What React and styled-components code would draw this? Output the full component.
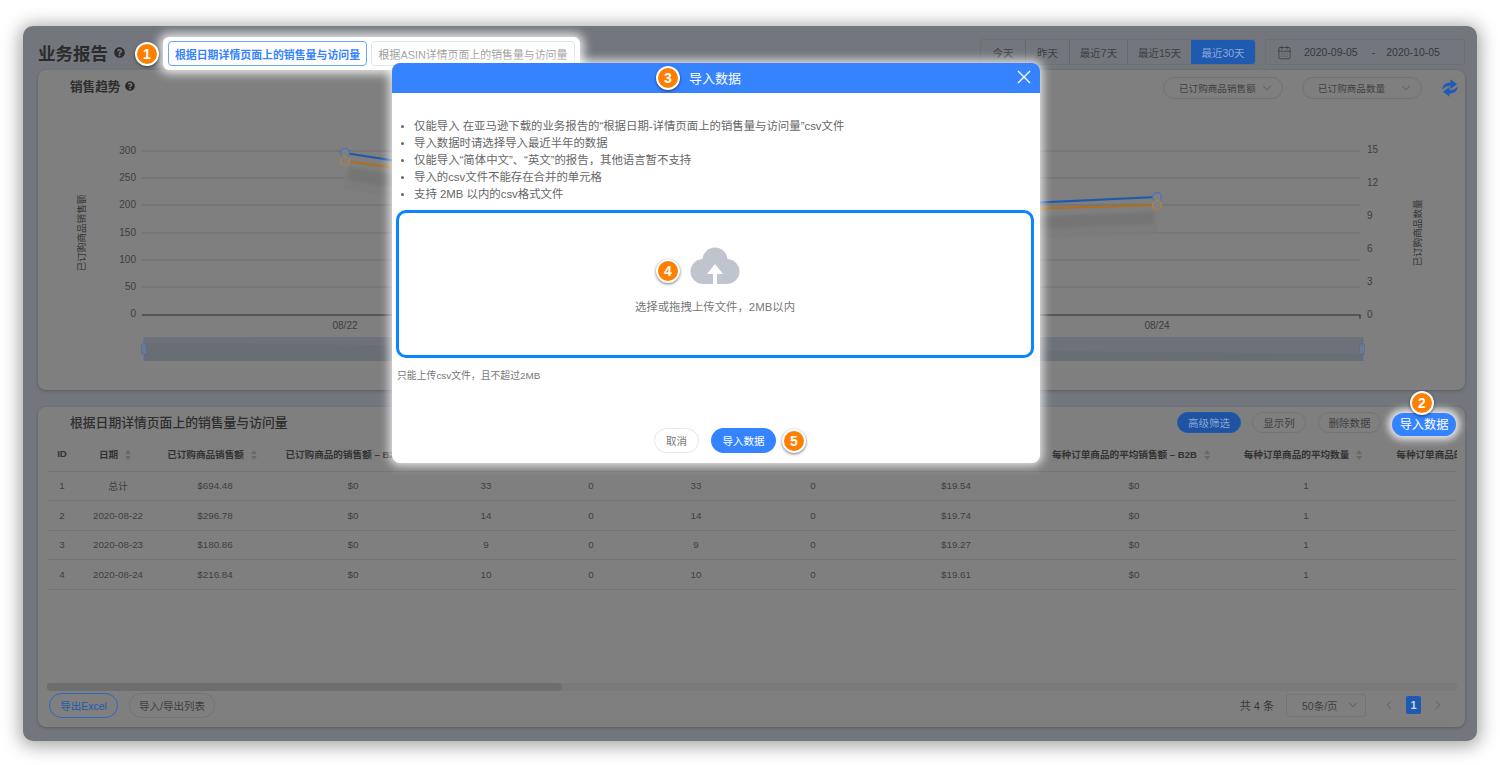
import React from "react";
import styled, { createGlobalStyle } from "styled-components";
import { FaQuestionCircle } from "react-icons/fa";
import { CalendarDays, ChevronDown, ChevronLeft, ChevronRight } from "lucide-react";

const Global = createGlobalStyle`
  html, body { margin: 0; padding: 0; background: #fff; }
  * { box-sizing: border-box; }
  body { font-family: "Liberation Sans", "Noto Sans CJK SC", sans-serif; }
`;

const Page = styled.div`
  position: relative;
  width: 1500px;
  height: 765px;
  padding: 26px 23px 24px;
  overflow: hidden;
`;
const Frame = styled.div`
  height: 715px;
  padding: 0 12px 14px 15px;
  background: #73777d;
  border-radius: 10px;
  box-shadow: 0 2px 18px 3px rgba(0, 0, 0, 0.36);
  display: flex;
  flex-direction: column;
`;
const Header = styled.header`
  height: 44px;
  padding-top: 8px;
  display: flex;
  align-items: center;
`;
const PageTitle = styled.h1`
  margin: 0;
  font-size: 17.5px;
  font-weight: 700;
  color: #2b2b2b;
  white-space: nowrap;
`;
const Help = styled(FaQuestionCircle)`
  color: #2b2b2b;
  flex: none;
  margin-left: ${(p) => p.$gap}px;
`;
const Tabs = styled.div`
  position: relative;
  z-index: 2;
  margin-left: 38px;
  margin-top: 3px;
  padding: 4px 5px;
  display: flex;
  gap: 4px;
  background: #fff;
  border-radius: 6px;
  box-shadow: 0 0 10px 4px rgba(255, 255, 255, 0.78);
`;
const Tab = styled.div`
  height: 25px;
  display: flex;
  align-items: center;
  justify-content: center;
  width: ${(p) => p.$w}px;
  font-size: 10.9px;
  white-space: nowrap;
  border-radius: 4px;
  border: 1px solid ${(p) => (p.$active ? "#6ba4ff" : "#dbe6f5")};
  color: ${(p) => (p.$active ? "#3583ff" : "#9a9a9a")};
  font-weight: ${(p) => (p.$active ? 700 : 400)};
`;
const RangeGroup = styled.div`
  margin-left: auto;
  display: flex;
  height: 26px;
  border: 1px solid #6c6f73;
  border-radius: 3px;
`;
const RangeButton = styled.div`
  width: ${(p) => p.$w}px;
  display: flex;
  align-items: center;
  justify-content: center;
  font-size: 10.5px;
  white-space: nowrap;
  color: ${(p) => (p.$active ? "#8aa9d8" : "#3c3f43")};
  background: ${(p) => (p.$active ? "#1f5ab0" : "transparent")};
  border-left: ${(p) => (p.$first || p.$active ? "none" : "1px solid #65686c")};
  border-radius: ${(p) => (p.$active ? "0 3px 3px 0" : "0")};
`;
const DatePicker = styled.div`
  margin-left: 9px;
  width: 200px;
  height: 26px;
  padding-left: 11px;
  display: flex;
  align-items: center;
  border: 1px solid #6c6f73;
  border-radius: 3px;
  color: #35383c;
  font-size: 10.5px;
`;
const DateText = styled.span`
  margin-left: ${(p) => p.$gap}px;
  white-space: nowrap;
`;
const Card = styled.section`
  height: 320px;
  background: #7f7f7f;
  border-radius: 8px;
  box-shadow: 0 1px 3px rgba(60, 64, 70, 0.5);
  display: flex;
  flex-direction: column;
  & + & { margin-top: 17px; }
`;
const ChartHead = styled.div`
  height: 30px;
  padding: 6px 7px 1px 32px;
  display: flex;
  align-items: center;
`;
const CardTitle = styled.h2`
  margin: 0;
  font-size: ${(p) => p.$size}px;
  font-weight: ${(p) => p.$weight};
  color: #2e2e2e;
  white-space: nowrap;
`;
const ChartTitleSlot = styled.div`
  display: flex;
  align-items: center;
  margin-top: -4px;
  margin-right: auto;
`;
const PillSelect = styled.div`
  width: 120px;
  height: 22px;
  padding: 0 8px 0 15px;
  display: flex;
  align-items: center;
  justify-content: space-between;
  border: 1px solid #737373;
  border-radius: 11px;
  font-size: 9.6px;
  white-space: nowrap;
  color: #3f3f3f;
  margin-left: ${(p) => p.$gap}px;
`;
const RefreshIcon = styled.svg`
  margin-left: 20px;
  flex: none;
  fill: #1f5ab4;
`;
const ChartSvg = styled.svg`
  display: block;
  width: 1427px;
  height: 290px;
  font-family: "Liberation Sans", "Noto Sans CJK SC", sans-serif;
`;
const TableHead = styled.div`
  height: 30px;
  padding: 0 9px 0 32px;
  display: flex;
  align-items: center;
  justify-content: flex-end;
`;
const TitleSlot = styled.div`
  margin-right: auto;
  margin-top: -2px;
`;
const Pill = styled.div`
  height: 21px;
  width: ${(p) => p.$w}px;
  margin-left: ${(p) => p.$gap}px;
  display: flex;
  align-items: center;
  justify-content: center;
  border-radius: 11px;
  font-size: 10.5px;
  white-space: nowrap;
  border: 1px solid ${(p) => (p.$primary ? "#1f5ab0" : "#747474")};
  color: ${(p) => (p.$primary ? "#86a6d6" : "#404040")};
  background: ${(p) => (p.$primary ? "#1f52a0" : "transparent")};
`;
const ImportPill = styled.div`
  position: relative;
  z-index: 2;
  top: 2px;
  margin-left: 11px;
  width: 64px;
  height: 23px;
  display: flex;
  align-items: center;
  justify-content: center;
  border-radius: 12px;
  background: #3583ff;
  color: #fff;
  font-size: 12.2px;
  white-space: nowrap;
  box-shadow: 0 0 7px 4px rgba(255, 255, 255, 0.8);
`;
const TableWrap = styled.div`
  flex: none;
  height: 246px;
  margin: 0 8px 0 9px;
  overflow: hidden;
`;
const Table = styled.table`
  width: 1504px;
  table-layout: fixed;
  border-collapse: collapse;
`;
const Th = styled.th`
  height: 34px;
  padding: 0 ${(p) => (p.$sort ? 6 : 0)}px 0 0;
  font-size: 9.6px;
  font-weight: 700;
  color: #333;
  white-space: nowrap;
  text-align: center;
  border-bottom: 1px solid #747474;
`;
const Td = styled.td`
  height: 29.5px;
  padding: 0;
  font-size: 9.8px;
  color: #404040;
  white-space: nowrap;
  text-align: center;
  border-bottom: 1px solid #747474;
`;
const SortMark = styled.span`
  display: inline-flex;
  flex-direction: column;
  gap: 2px;
  margin-left: 7px;
  vertical-align: middle;
  &::before, &::after {
    content: "";
    width: 0;
    height: 0;
    border-left: 3.5px solid transparent;
    border-right: 3.5px solid transparent;
  }
  &::before { border-bottom: 4px solid #696969; }
  &::after { border-top: 4px solid #696969; }
`;
const ScrollTrack = styled.div`
  height: 8px;
  margin: 0 8px 0 9px;
  background: #7a7a7a;
  border-radius: 4px;
`;
const ScrollThumb = styled.div`
  width: 515px;
  height: 8px;
  background: #6e6e6e;
  border-radius: 4px;
`;
const Footer = styled.div`
  flex: 1;
  padding: 0 20px 8px 11px;
  display: flex;
  align-items: center;
`;
const FootButton = styled.div`
  height: 25px;
  width: ${(p) => p.$w}px;
  margin-right: 11px;
  display: flex;
  align-items: center;
  justify-content: center;
  border-radius: 13px;
  font-size: 10.5px;
  white-space: nowrap;
  color: ${(p) => (p.$primary ? "#1f5ab0" : "#404040")};
  border: 1px solid ${(p) => (p.$primary ? "#2f68c0" : "#747474")};
`;
const Total = styled.div`
  margin-left: auto;
  font-size: 11px;
  color: #383838;
  white-space: nowrap;
`;
const PageSize = styled.div`
  margin-left: 12px;
  width: 80px;
  height: 23px;
  padding: 0 5px 0 15px;
  display: flex;
  align-items: center;
  justify-content: space-between;
  border: 1px solid #747474;
  border-radius: 3px;
  font-size: 10.5px;
  color: #404040;
`;
const Pager = styled.div`
  margin-left: 16px;
  display: flex;
  align-items: center;
  gap: 10px;
  color: #5f5f5f;
`;
const PageNum = styled.div`
  width: 15px;
  height: 18px;
  display: flex;
  align-items: center;
  justify-content: center;
  background: #1f5ab0;
  border-radius: 2px;
  color: #c9d6ea;
  font-size: 11px;
  font-weight: 700;
`;
const Modal = styled.div`
  position: absolute;
  z-index: 3;
  left: 392px;
  top: 63px;
  width: 648px;
  height: 400px;
  background: #fff;
  border-radius: 8px;
  box-shadow: 0 0 10px 3px rgba(255, 255, 255, 0.8);
  display: flex;
  flex-direction: column;
`;
const ModalHead = styled.div`
  position: relative;
  height: 30px;
  flex: none;
  background: #3583ff;
  border-radius: 8px 8px 0 0;
  display: flex;
  align-items: center;
  justify-content: center;
  padding-bottom: 2px;
  padding-right: 2px;
  color: #fff;
  font-size: 13px;
`;
const CloseIcon = styled.svg`
  position: absolute;
  right: 9px;
  top: 7px;
`;
const Rules = styled.ul`
  margin: 25px 0 0;
  padding: 0 0 0 22px;
  font-size: 11.4px;
  line-height: 17px;
  color: #666;
  li { padding: 0; white-space: nowrap; }
  li::marker { color: #666; font-size: 10px; }
`;
const DropZone = styled.div`
  margin: 7px 6px 0 4px;
  height: 148px;
  flex: none;
  border: 3px solid #0a84ff;
  border-radius: 10px;
  display: flex;
  flex-direction: column;
  align-items: center;
  padding-top: 34px;
`;
const DropText = styled.div`
  margin-top: 15px;
  font-size: 11.4px;
  line-height: 16px;
  color: #777;
`;
const Hint = styled.div`
  margin: 11px 0 0 5px;
  font-size: 9.85px;
  line-height: 14px;
  color: #777;
`;
const ModalFooter = styled.div`
  margin-top: auto;
  padding-bottom: 10px;
  padding-left: 262px;
  display: flex;
  gap: 12px;
`;
const CancelButton = styled.div`
  width: 45px;
  height: 25px;
  display: flex;
  align-items: center;
  justify-content: center;
  border: 1px solid #e3e6ea;
  border-radius: 13px;
  color: #777;
  font-size: 10.5px;
`;
const ConfirmButton = styled.div`
  width: 65px;
  height: 25px;
  display: flex;
  align-items: center;
  justify-content: center;
  border-radius: 13px;
  background: #3583ff;
  color: #fff;
  font-size: 10.5px;
`;
const Badge = styled.div`
  position: absolute;
  z-index: 5;
  left: ${(p) => p.$x - 12}px;
  top: ${(p) => p.$y - 12}px;
  width: 24px;
  height: 24px;
  display: flex;
  align-items: center;
  justify-content: center;
  background: #ff8000;
  border: 2px solid #fff;
  border-radius: 50%;
  color: #fff;
  font-size: 14px;
  font-weight: 700;
  box-shadow: 0 1px 3px rgba(0, 0, 0, 0.55);
`;

const leftTicks = [[300, 151], [250, 178], [200, 205], [150, 233], [100, 260], [50, 287]];
const rightTicks = [[15, 149], [12, 182], [9, 215], [6, 248], [3, 281], [0, 314]];

function Chart() {
  return (
    <ChartSvg viewBox="38 100 1427 290">
      <defs>
        <filter id="soft" x="-5%" y="-50%" width="110%" height="200%">
          <feGaussianBlur stdDeviation="1.6" />
        </filter>
      </defs>
      {leftTicks.map(([label, y]) => (
        <g key={label}>
          <line x1="142" x2="1360" y1={y} y2={y} stroke="#6e6e6e" strokeWidth="1" />
          <text x="136" y={y + 3} textAnchor="end" fontSize="10" fill="#3e3e3e">{label}</text>
        </g>
      ))}
      <text x="136" y="317" textAnchor="end" fontSize="10" fill="#3e3e3e">0</text>
      <line x1="142" x2="1360.5" y1="315" y2="315" stroke="#2f2f2f" strokeWidth="1" />
      <line x1="1360" x2="1360" y1="315" y2="319" stroke="#2f2f2f" strokeWidth="1" />
      {rightTicks.map(([label, y]) => (
        <text key={label} x="1367" y={y + 3.5} fontSize="10" fill="#3e3e3e">{label}</text>
      ))}
      <text x="345" y="329" textAnchor="middle" fontSize="10" fill="#3e3e3e">08/22</text>
      <text x="751" y="329" textAnchor="middle" fontSize="10" fill="#3e3e3e">08/23</text>
      <text x="1157" y="329" textAnchor="middle" fontSize="10" fill="#3e3e3e">08/24</text>
      <text transform="translate(85 233) rotate(-90)" textAnchor="middle" fontSize="9.6" fill="#333">已订购商品销售额</text>
      <text transform="translate(1421 233) rotate(-90)" textAnchor="middle" fontSize="9.6" fill="#333">已订购商品数量</text>

      <polyline points="345,178 751,240 1157,222" fill="none" stroke="#7b7b7b" strokeWidth="22" filter="url(#soft)" />
      <polyline points="349,174 751,236 1153,218" fill="none" stroke="#747474" strokeWidth="12" filter="url(#soft)" />
      <polyline points="345,153 751,216 1157,197" fill="none" stroke="#1f58ad" strokeWidth="2.2" />
      <polyline points="345,161 751,217 1157,205" fill="none" stroke="#b06e20" strokeWidth="2.2" />
      <circle cx="345" cy="153" r="4.5" fill="#808080" stroke="#3f74c4" strokeWidth="1.2" />
      <circle cx="345" cy="161" r="4.5" fill="#808080" stroke="#b98242" strokeWidth="1.2" />
      <circle cx="1157" cy="197" r="4.5" fill="#808080" stroke="#3f74c4" strokeWidth="1.2" />
      <circle cx="1157" cy="205" r="4.5" fill="#808080" stroke="#b98242" strokeWidth="1.2" />

      <rect x="144" y="337" width="1219" height="24" fill="#696d74" />
      <polygon points="144,343 1363,354 1363,337 144,337" fill="#6d7179" />
      <line x1="144" x2="144" y1="337" y2="361" stroke="#5b7399" strokeWidth="1" />
      <line x1="1363" x2="1363" y1="337" y2="361" stroke="#5b7399" strokeWidth="1" />
      <rect x="141.5" y="344" width="5" height="10" rx="1" fill="#667a9a" stroke="#56698a" strokeWidth="0.6" />
      <rect x="1359.5" y="344" width="5" height="10" rx="1" fill="#667a9a" stroke="#56698a" strokeWidth="0.6" />
    </ChartSvg>
  );
}

const columns = [
  { w: 30, t: "ID" },
  { w: 82, t: "日期", s: 1 },
  { w: 112, t: "已订购商品销售额", s: 1 },
  { w: 164, t: "已订购商品的销售额 – B2B", s: 1 },
  { w: 102, t: "已订购商品数量", s: 1 },
  { w: 108, t: "数量 – B2B", s: 1 },
  { w: 102, t: "订单商品种类数", s: 1 },
  { w: 132, t: "种类数 – B2B", s: 1 },
  { w: 154, t: "每种订单商品的平均销售额", s: 1 },
  { w: 202, t: "每种订单商品的平均销售额 – B2B", s: 1 },
  { w: 142, t: "每种订单商品的平均数量", s: 1 },
  { w: 174, t: "每种订单商品的平均数量 – B2B", s: 0 },
];

const rows = [
  ["1", "总计", "$694.48", "$0", "33", "0", "33", "0", "$19.54", "$0", "1", ""],
  ["2", "2020-08-22", "$296.78", "$0", "14", "0", "14", "0", "$19.74", "$0", "1", ""],
  ["3", "2020-08-23", "$180.86", "$0", "9", "0", "9", "0", "$19.27", "$0", "1", ""],
  ["4", "2020-08-24", "$216.84", "$0", "10", "0", "10", "0", "$19.61", "$0", "1", ""],
];

function CloudUpload() {
  return (
    <svg width="50" height="37" viewBox="0 0 50 37">
      <g fill="#c0c4ce">
        <circle cx="25" cy="13" r="12.5" />
        <circle cx="13" cy="24.5" r="12.5" />
        <circle cx="37" cy="24.5" r="12.5" />
        <rect x="13" y="20" width="24" height="17" />
      </g>
      <polygon points="25,17 33,27 27,27 27,37 23,37 23,27 17,27" fill="#fff" />
    </svg>
  );
}

export default function App() {
  return (
    <Page>
      <Global />
      <Frame>
        <Header>
          <PageTitle>业务报告</PageTitle>
          <Help size={11} $gap={6} />
          <Tabs>
            <Tab $active $w={199}>根据日期详情页面上的销售量与访问量</Tab>
            <Tab $w={204}>根据ASIN详情页面上的销售量与访问量</Tab>
          </Tabs>
          <RangeGroup>
            <RangeButton $first $w={44}>今天</RangeButton>
            <RangeButton $w={44}>昨天</RangeButton>
            <RangeButton $w={58}>最近7天</RangeButton>
            <RangeButton $w={64}>最近15天</RangeButton>
            <RangeButton $active $w={64}>最近30天</RangeButton>
          </RangeGroup>
          <DatePicker>
            <CalendarDays size={15} strokeWidth={1.2} />
            <DateText $gap={12}>2020-09-05</DateText>
            <DateText $gap={14}>-</DateText>
            <DateText $gap={11}>2020-10-05</DateText>
          </DatePicker>
        </Header>

        <Card>
          <ChartHead>
            <ChartTitleSlot>
              <CardTitle $size={12.6} $weight={700}>销售趋势</CardTitle>
              <Help size={10} $gap={5} />
            </ChartTitleSlot>
            <PillSelect>已订购商品销售额<ChevronDown size={14} strokeWidth={1} /></PillSelect>
            <PillSelect $gap={19}>已订购商品数量<ChevronDown size={14} strokeWidth={1} /></PillSelect>
            <RefreshIcon width="16" height="18" viewBox="0 0 16 18">
              <path d="M0.5 10.5 C0.5 6 4 3.2 8.5 3.4 V0.3 L15 5.2 L8.5 10 V7 C5.5 6.8 2.6 7.8 0.5 10.5 Z" />
              <path d="M15.5 7.5 C15.5 12 12 14.8 7.5 14.6 V17.7 L1 12.8 L7.5 8 V11 C10.5 11.2 13.4 10.2 15.5 7.5 Z" />
            </RefreshIcon>
          </ChartHead>
          <Chart />
        </Card>

        <Card>
          <TableHead>
            <TitleSlot>
              <CardTitle $size={12.8} $weight={500}>根据日期详情页面上的销售量与访问量</CardTitle>
            </TitleSlot>
            <Pill $primary $w={64}>高级筛选</Pill>
            <Pill $w={54} $gap={11}>显示列</Pill>
            <Pill $w={63} $gap={12}>删除数据</Pill>
            <ImportPill>导入数据</ImportPill>
          </TableHead>
          <TableWrap>
            <Table>
              <colgroup>
                {columns.map((c, i) => <col key={i} width={c.w} />)}
              </colgroup>
              <thead>
                <tr>
                  {columns.map((c, i) => (
                    <Th key={i} $sort={c.s}>{c.t}{c.s ? <SortMark /> : null}</Th>
                  ))}
                </tr>
              </thead>
              <tbody>
                {rows.map((r) => (
                  <tr key={r[0]}>
                    {r.map((v, i) => <Td key={i}>{v}</Td>)}
                  </tr>
                ))}
              </tbody>
            </Table>
          </TableWrap>
          <ScrollTrack><ScrollThumb /></ScrollTrack>
          <Footer>
            <FootButton $primary $w={69}>导出Excel</FootButton>
            <FootButton $w={86}>导入/导出列表</FootButton>
            <Total>共 4 条</Total>
            <PageSize>50条/页<ChevronDown size={14} strokeWidth={1} /></PageSize>
            <Pager>
              <ChevronLeft size={14} strokeWidth={1.6} />
              <PageNum>1</PageNum>
              <ChevronRight size={14} strokeWidth={1.6} />
            </Pager>
          </Footer>
        </Card>
      </Frame>

      <Modal>
        <ModalHead>
          导入数据
          <CloseIcon width="14" height="14" viewBox="0 0 14 14">
            <path d="M1 1 L13 13 M13 1 L1 13" stroke="#fff" strokeWidth="1.3" fill="none" />
          </CloseIcon>
        </ModalHead>
        <Rules>
          <li>仅能导入 在亚马逊下载的业务报告的“根据日期-详情页面上的销售量与访问量”csv文件</li>
          <li>导入数据时请选择导入最近半年的数据</li>
          <li>仅能导入“简体中文”、“英文”的报告，其他语言暂不支持</li>
          <li>导入的csv文件不能存在合并的单元格</li>
          <li>支持 2MB 以内的csv格式文件</li>
        </Rules>
        <DropZone>
          <CloudUpload />
          <DropText>选择或拖拽上传文件，2MB以内</DropText>
        </DropZone>
        <Hint>只能上传csv文件，且不超过2MB</Hint>
        <ModalFooter>
          <CancelButton>取消</CancelButton>
          <ConfirmButton>导入数据</ConfirmButton>
        </ModalFooter>
      </Modal>

      <Badge $x={147} $y={54}>1</Badge>
      <Badge $x={1422} $y={403}>2</Badge>
      <Badge $x={668} $y={78}>3</Badge>
      <Badge $x={668} $y={271}>4</Badge>
      <Badge $x={794} $y={441}>5</Badge>
    </Page>
  );
}
